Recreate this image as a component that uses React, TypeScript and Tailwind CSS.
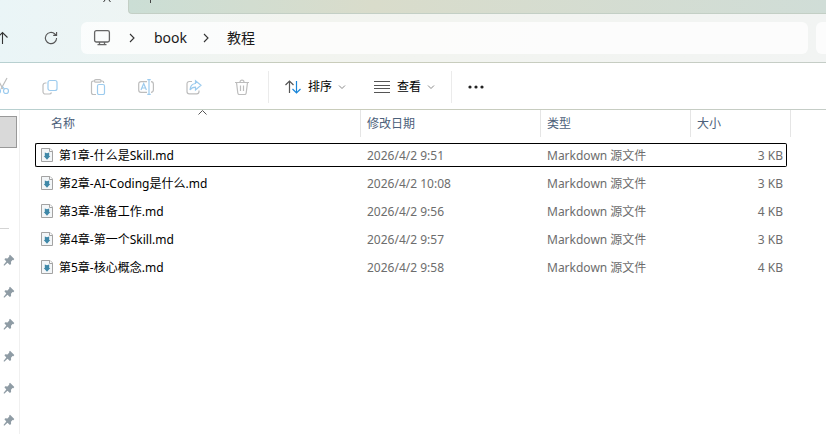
import React from "react";

const files = [
  { name: "第1章-什么是Skill.md", date: "2026/4/2 9:51", size: "3 KB" },
  { name: "第2章-AI-Coding是什么.md", date: "2026/4/2 10:08", size: "3 KB" },
  { name: "第3章-准备工作.md", date: "2026/4/2 9:56", size: "4 KB" },
  { name: "第4章-第一个Skill.md", date: "2026/4/2 9:57", size: "3 KB" },
  { name: "第5章-核心概念.md", date: "2026/4/2 9:58", size: "4 KB" },
];

const pins = [1, 2, 3, 4, 5, 6];

export default function App() {
  return (
    <div className="flex h-screen flex-col overflow-hidden bg-white font-['Noto_Sans','Noto_Sans_CJK_SC',sans-serif] text-xs text-black">
      <header className="bg-linear-to-r from-[#eaf5f7] via-[#f2f4ef] via-35% to-[#f2f4f3]">
        <TabStrip />
        <AddressRow />
      </header>
      <Toolbar />
      <div className="flex min-h-0 flex-1">
        <Sidebar />
        <main className="min-w-0 flex-1 overflow-hidden pl-[15px]">
          <FileTable />
        </main>
      </div>
    </div>
  );
}

const TabStrip = () => {
  return (
    <div className="flex h-3.5">
      <div className="flex w-32 justify-end pr-[17px]">
        <button aria-label="关闭标签页" className="h-3.5 w-2">
          <svg width="8" height="14" viewBox="0 0 8 14" fill="none" stroke="#333">
            <path d="M0.5 2 4-2.5 7.5 2" />
          </svg>
        </button>
      </div>
      <div className="flex-1 rounded-bl border-b border-l border-[#c3cfc5] bg-linear-to-r from-[#cbded5] via-[#d9dccb] via-35% to-[#d0ddd7] pl-[17px]">
        <button aria-label="新建标签页" className="block h-3 w-3">
          <svg width="12" height="12" viewBox="0 0 12 12" stroke="#444">
            <path d="M4.5 0v3" />
          </svg>
        </button>
      </div>
    </div>
  );
};

const AddressRow = () => {
  return (
    <div className="flex h-12 items-center">
      <button aria-label="上移" className="h-8 w-9">
        <svg width="36" height="32" viewBox="0 0 36 32" fill="none" stroke="#333" strokeWidth="1.1">
          <path d="M2.5 22V10.5M-2.5 15.5l5-5 5 5" />
        </svg>
      </button>
      <button aria-label="刷新" className="mr-[15px] flex h-8 w-[30px] items-center justify-center">
        <svg width="14" height="14" viewBox="0 0 14 14" fill="none" stroke="#555" strokeWidth="1.1">
          <path d="M12.6 7A5.6 5.6 0 1 1 10.9 3L12.6 4.4M12.6 1V4.4H9.2" />
        </svg>
      </button>
      <nav
        aria-label="路径"
        className="flex h-8 flex-1 items-center rounded-md bg-white/75 pl-3 text-sm text-[#1a1a1a]"
      >
        <svg width="18" height="18" viewBox="0 0 18 18" fill="none" stroke="#666" strokeWidth="1.3">
          <rect x="1.6" y="1.6" width="14.8" height="11.4" rx="1.8" />
          <path d="M6.5 13v2.5M11.5 13v2.5M4.5 15.7h9" />
        </svg>
        <Chevron className="ml-[18px]" />
        <a href="#book" className="ml-[19px]">
          book
        </a>
        <Chevron className="ml-4" />
        <a href="#tutorial" className="ml-[18px]">
          教程
        </a>
      </nav>
      <div className="ml-2 h-8 w-2.5 rounded-l-md bg-white/75" />
    </div>
  );
};

const Chevron = ({ className }: { className: string }) => (
  <svg width="6" height="10" viewBox="0 0 6 10" fill="none" stroke="#333" strokeWidth="1.1" className={className}>
    <path d="M1 1l4 4-4 4" />
  </svg>
);

const Down = () => (
  <svg width="8" height="6" viewBox="0 0 8 6" fill="none" stroke="#8a8a8a">
    <path d="M1 1.5l3 3 3-3" />
  </svg>
);

const GRAY = "#bdbdbd";
const BLUE = "#9ccbee";

const Toolbar = () => {
  return (
    <div className="bg-linear-to-r from-[#b7d0d1] via-[#c9ccba] via-40% to-[#c5cdc7] py-px">
      <div className="flex h-[46px] items-center bg-white pt-0.5">
        <button aria-label="剪切" className="h-8 w-[26px]" disabled>
          <svg width="26" height="32" viewBox="0 0 26 32" fill="none" stroke={GRAY} strokeWidth="1.2">
            <path d="M7 7 1 18M-3 7l6 11" />
            <circle cx="6" cy="20" r="2.5" stroke={BLUE} />
            <circle cx="-2" cy="20" r="2.5" stroke={BLUE} />
            <path d="M2.500 15.500l2 2.500" stroke={BLUE} />
          </svg>
        </button>
        <ToolButton label="复制">
          <path d="M4.500 4H3.300A2.300 2.300 0 0 0 1 6.300V12.700A2.300 2.300 0 0 0 3.300 15H7.200A2.300 2.300 0 0 0 9.500 13.500" />
          <rect x="6" y="1.500" width="9" height="10" rx="2" stroke={BLUE} />
        </ToolButton>
        <ToolButton label="粘贴">
          <path d="M4.500 2H3.200A1.700 1.700 0 0 0 1.500 3.700V13.800A1.700 1.700 0 0 0 3.200 15.500H6M11 2h1a1.700 1.700 0 0 1 1.700 1.700V4" />
          <rect x="4.500" y=".600" width="6.500" height="2.600" rx="1.300" />
          <rect x="7.500" y="5.500" width="7" height="10" rx="1.500" stroke={BLUE} />
        </ToolButton>
        <ToolButton label="重命名">
          <path d="M9 2.600H3A2.300 2.300 0 0 0 .700 4.900V11A2.300 2.300 0 0 0 3 13.300H9M13 2.600A2.500 2.500 0 0 1 15.400 5V11A2.500 2.500 0 0 1 13 13.300" />
          <path d="M11 .600V15.400M9.300 .600h3.400M9.300 15.400h3.400M3 11 5.700 4.500 8.400 11M4 9h3.500" stroke={BLUE} />
        </ToolButton>
        <ToolButton label="共享">
          <path d="M6 2.500H3.300A2.300 2.300 0 0 0 1 4.800V12.500A2.300 2.300 0 0 0 3.300 14.800H10.700A2.300 2.300 0 0 0 13 12.500V11.500" />
          <path d="M9.500 4.500V1.700L15 6.300 9.500 11V8.200C6.800 8.200 5.200 9 4 11 4.200 7.200 6.200 4.800 9.500 4.500Z" stroke={BLUE} />
        </ToolButton>
        <ToolButton label="删除">
          <path d="M1 3.500h14M6 3.200A2 2 0 0 1 10 3.200M2.500 3.500 3.800 14Q4 15.500 5.300 15.500H10.700Q12 15.500 12.200 14L13.500 3.500M6.500 6.500v5.500M9.500 6.500v5.500" />
        </ToolButton>
        <div className="ml-0.5 h-8 w-px bg-[#ebebeb]" />
        <button className="ml-4 flex h-8 items-center">
          <svg width="16" height="14" viewBox="0 0 16 14" fill="none" strokeWidth="1.200">
            <path d="M4.500 13V1M.500 5l4-4 4 4" stroke="#555" />
            <path d="M11.500 1v12M7.500 9l4 4 4-4" stroke="#1a86d9" />
          </svg>
          <span className="mr-1.5 ml-[7px]">排序</span>
          <Down />
        </button>
        <button className="ml-7 flex h-8 items-center">
          <svg width="16" height="12" viewBox="0 0 16 12" stroke="#555">
            <path d="M0 .500h16M0 4.500h16M0 7.500h16M0 11.500h16" />
          </svg>
          <span className="mr-1.5 ml-[7px]">查看</span>
          <Down />
        </button>
        <div className="ml-4 h-8 w-px bg-[#ebebeb]" />
        <button aria-label="查看更多" className="ml-4 h-8">
          <svg width="16" height="4" viewBox="0 0 16 4" fill="#222">
            <circle cx="2" cy="2" r="1.600" />
            <circle cx="8" cy="2" r="1.600" />
            <circle cx="14" cy="2" r="1.600" />
          </svg>
        </button>
      </div>
    </div>
  );
};

const ToolButton = ({ label, children }: { label: string; children: React.ReactNode }) => (
  <button aria-label={label} disabled className="flex h-8 w-12 items-center justify-center">
    <svg width="16" height="16" viewBox="0 0 16 16" fill="none" stroke={GRAY} strokeWidth="1.2">
      {children}
    </svg>
  </button>
);

const Sidebar = () => {
  return (
    <aside className="w-5 shrink-0 overflow-hidden border-r border-[#f0f0f0] pt-1.5">
      <div className="h-8 w-[17px] border border-l-0 border-[#999] bg-[#d9d9d9]" />
      <div className="mt-20 h-px w-[9px] bg-[#d4d4d4]" />
      <ul className="mt-[15px]">
        {pins.map((pin) => (
          <li key={pin} className="flex h-8 items-center pl-[3px]">
            <svg width="12" height="12" viewBox="0 0 12 12" fill="#8f9ca5">
              <path d="M7 .800 11.300 5 10.400 6.200 9.500 6 8 7.700 8.100 9.900 6.900 11 4.500 8.800 1.200 11.700 .500 10.900 3.300 7.600 1.400 5.200 2.300 4.300 4.500 4.400 6.300 2.600 6.100 1.700Z" />
            </svg>
          </li>
        ))}
      </ul>
    </aside>
  );
};

const FileTable = () => {
  return (
    <table className="w-[756px] table-fixed border-collapse text-left text-[#6d6d6d]">
      <colgroup>
        <col className="w-[326px]" />
        <col className="w-[180px]" />
        <col className="w-[150px]" />
        <col className="w-24" />
        <col className="w-1" />
      </colgroup>
      <thead className="text-[#4c607a]">
        <tr className="h-[31px] align-top">
          <th className="p-0 font-normal" aria-sort="ascending">
            <div className="relative flex h-[27px] items-center border-r border-[#e5e5e5] pl-4">
              名称
              <svg
                width="9"
                height="6"
                viewBox="0 0 9 6"
                fill="none"
                stroke="#555"
                className="absolute top-0 left-1/2"
              >
                <path d="M.500 4.500l4-4 4 4" />
              </svg>
            </div>
          </th>
          <th className="p-0 font-normal">
            <div className="flex h-[27px] items-center border-r border-[#e5e5e5] pl-1.5">修改日期</div>
          </th>
          <th className="p-0 font-normal">
            <div className="flex h-[27px] items-center border-r border-[#e5e5e5] pl-1.5">类型</div>
          </th>
          <th className="p-0 font-normal" colSpan={2}>
            <div className="flex h-[27px] items-center border-r border-[#e5e5e5] pl-1.5">大小</div>
          </th>
        </tr>
      </thead>
      <tbody>
        {files.map((file, i) => {
          const line = i === 0 ? "border-black" : "border-transparent";
          return (
            <tr key={file.name} className="h-7">
              <td className="p-0">
                <div className={`flex h-6 items-center gap-1 rounded-l-xs border-y border-l pt-0.5 pl-[5px] text-black ${line}`}>
                  <MarkdownIcon />
                  {file.name}
                </div>
              </td>
              <td className="p-0">
                <div className={`flex h-6 items-center border-y pt-0.5 pl-1.5 ${line}`}>{file.date}</div>
              </td>
              <td className="p-0">
                <div className={`flex h-6 items-center border-y pt-0.5 pl-1.5 ${line}`}>Markdown 源文件</div>
              </td>
              <td className="p-0">
                <div className={`flex h-6 items-center justify-end rounded-r-xs border-y border-r pt-0.5 pr-[3px] ${line}`}>
                  {file.size}
                </div>
              </td>
              <td className="p-0" />
            </tr>
          );
        })}
      </tbody>
    </table>
  );
};

const MarkdownIcon = () => (
  <svg width="14" height="16" viewBox="0 0 14 16">
    <path d="M.500 .500h8.500l2.500 2.500v10.500H.500Z" fill="#f3f6f8" stroke="#a3a3a3" />
    <path d="M8.500 .500v3h3" fill="#fff" stroke="#a3a3a3" />
    <path d="M3.800 4.500 6 5.200 8.200 4.500V8H9.300L6 11.700 2.700 8H3.800Z" fill="#3f88a8" />
  </svg>
);
